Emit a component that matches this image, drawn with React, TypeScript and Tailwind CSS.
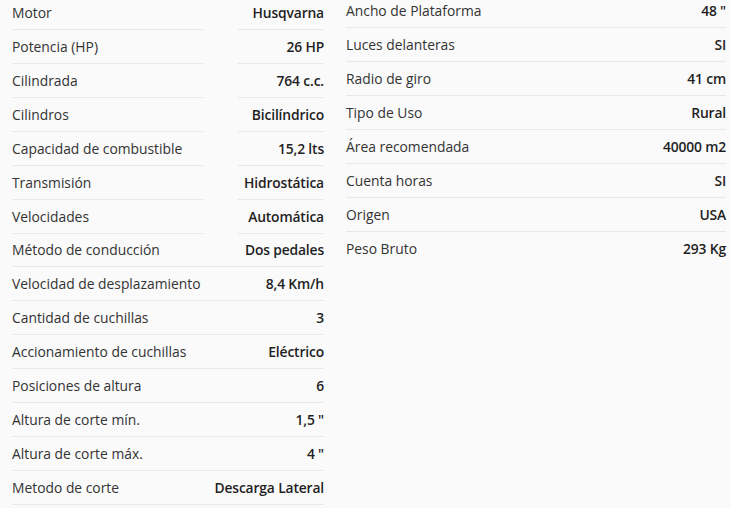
import React from "react";

const splitRows: [string, string][] = [
  ["Motor", "Husqvarna"],
  ["Potencia (HP)", "26 HP"],
  ["Cilindrada", "764 c.c."],
  ["Cilindros", "Bicilíndrico"],
  ["Capacidad de combustible", "15,2 lts"],
  ["Transmisión", "Hidrostática"],
  ["Velocidades", "Automática"],
];

const fullRows: [string, string][] = [
  ["Método de conducción", "Dos pedales"],
  ["Velocidad de desplazamiento", "8,4 Km/h"],
  ["Cantidad de cuchillas", "3"],
  ["Accionamiento de cuchillas", "Eléctrico"],
  ["Posiciones de altura", "6"],
  ["Altura de corte mín.", "1,5 \""],
  ["Altura de corte máx.", "4 \""],
  ["Metodo de corte", "Descarga Lateral"],
];

const rightRows: [string, string][] = [
  ["Ancho de Plataforma", "48 \""],
  ["Luces delanteras", "SI"],
  ["Radio de giro", "41 cm"],
  ["Tipo de Uso", "Rural"],
  ["Área recomendada", "40000 m2"],
  ["Cuenta horas", "SI"],
  ["Origen", "USA"],
  ["Peso Bruto", "293 Kg"],
];

export default function App() {
  return (
    <div className="w-[730px] h-[508px] overflow-hidden bg-[#fafafa] flex font-['Open_Sans',sans-serif] text-[13.85px] text-[#333]">
      <div className="ml-[12px] w-[312px] -mt-[4px] flex flex-col shrink-0">
        {splitRows.map(([l, v], i) => (
          <div key={i} className="flex h-[34px]">
            <div className="w-[191px] border-b border-[#e8e8e8] flex items-center pt-[1px]">{l}</div>
            <div className="w-[35px]" />
            <div className="flex-1 border-b border-[#e8e8e8] flex items-center justify-end pt-[1px] font-semibold tracking-[-0.15px] text-[#1f1f1f]">{v}</div>
          </div>
        ))}
        {fullRows.map(([l, v], i) => (
          <div key={i} className={`flex justify-between items-center pt-[1px] border-b border-[#e8e8e8] ${i === 0 ? "h-[33px]" : "h-[34px]"}`}>
            <span>{l}</span>
            <span className="font-semibold tracking-[-0.15px] text-[#1f1f1f]">{v}</span>
          </div>
        ))}
      </div>
      <div className="ml-[22px] w-[380px] -mt-[6px] flex flex-col shrink-0">
        {rightRows.map(([l, v], i) => (
          <div key={i} className={`flex justify-between items-center pt-[1px] h-[34px] ${i < rightRows.length - 1 ? "border-b border-[#e8e8e8]" : ""}`}>
            <span>{l}</span>
            <span className="font-semibold tracking-[-0.15px] text-[#1f1f1f]">{v}</span>
          </div>
        ))}
      </div>
    </div>
  );
}
